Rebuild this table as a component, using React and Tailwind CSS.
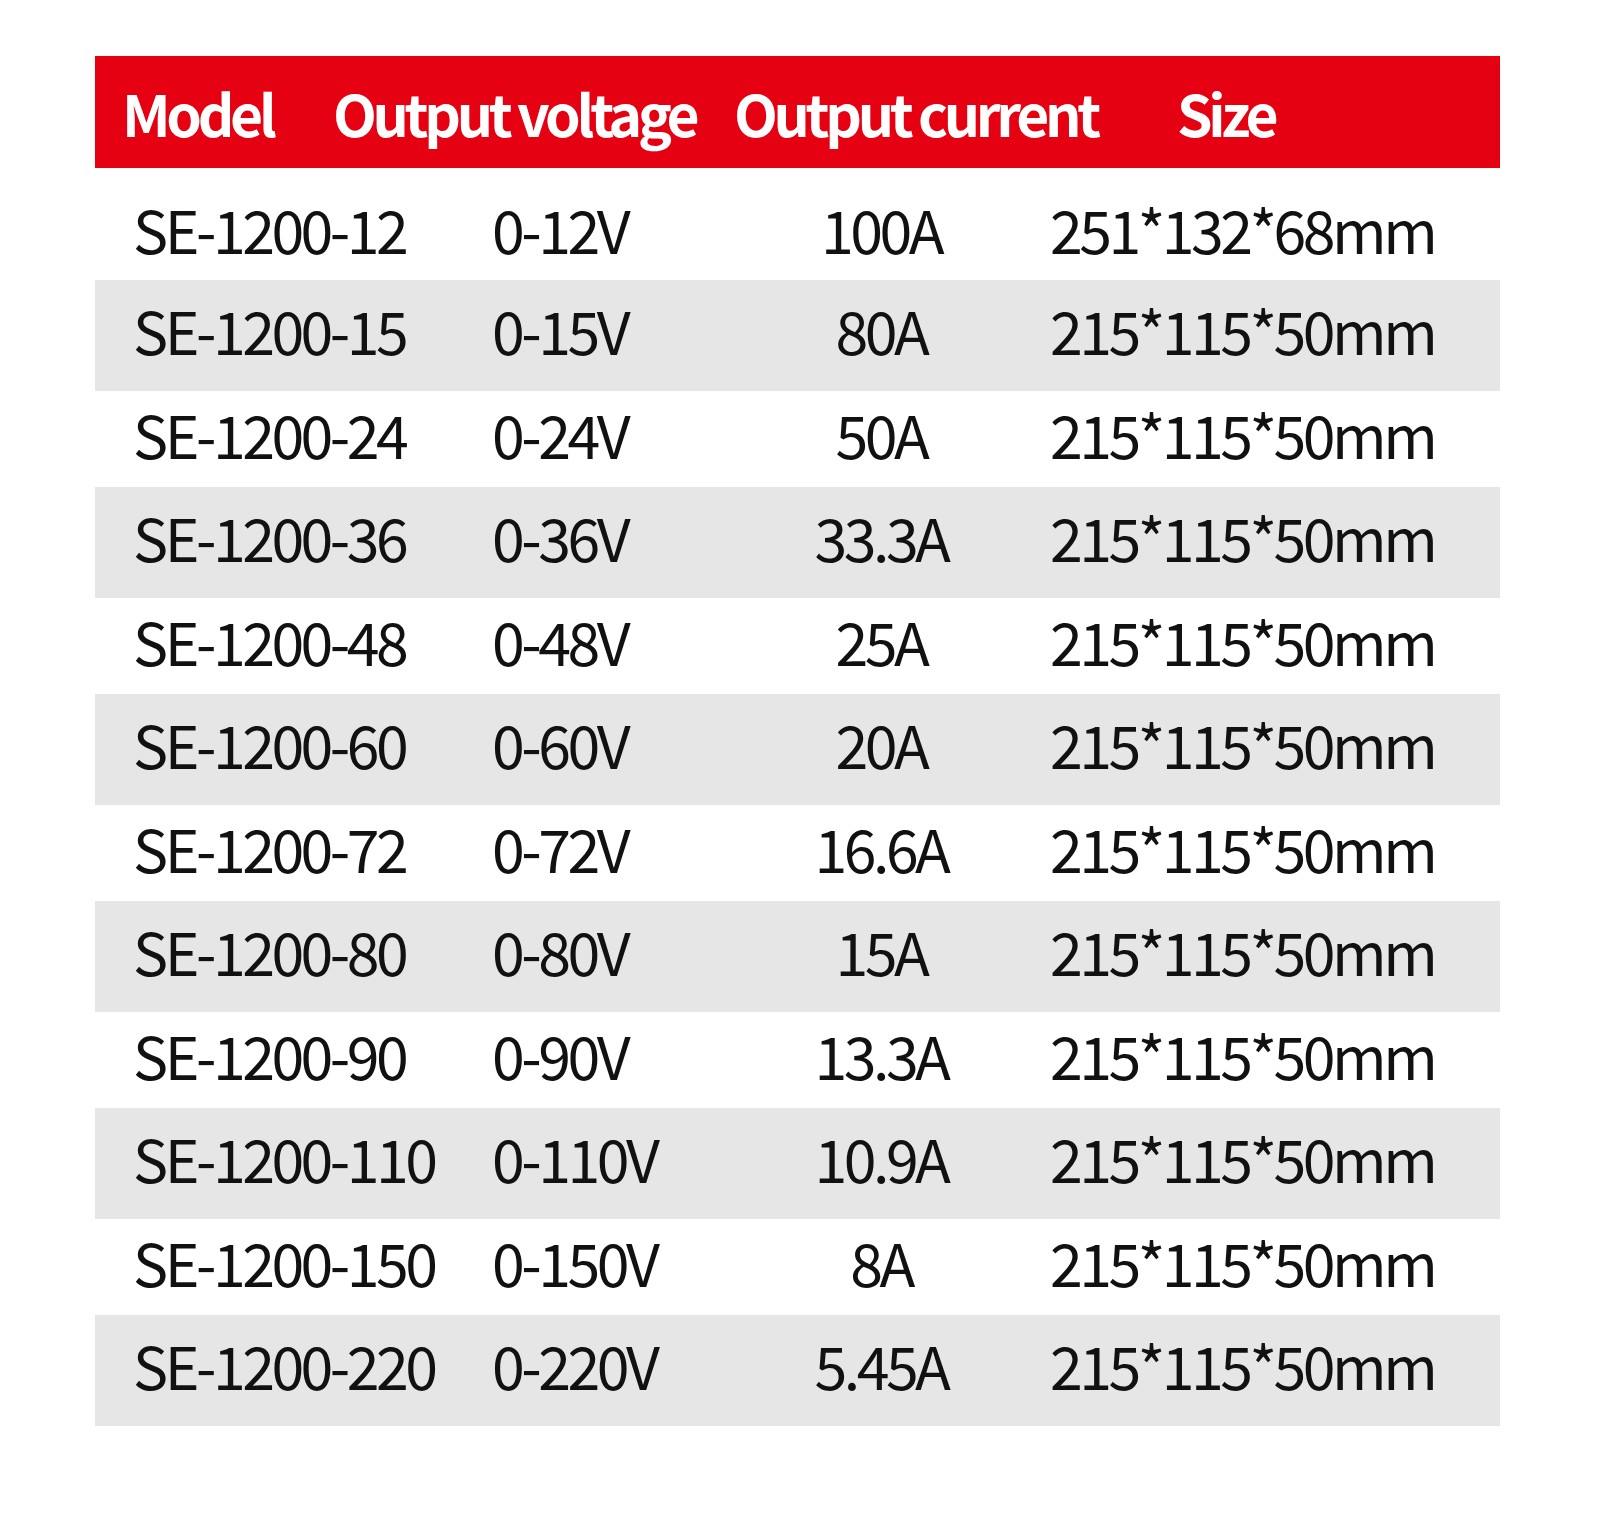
const rows = [
    ['SE-1200-12', '0-12V', '100A', '251*132*68mm'],
    ['SE-1200-15', '0-15V', '80A', '215*115*50mm'],
    ['SE-1200-24', '0-24V', '50A', '215*115*50mm'],
    ['SE-1200-36', '0-36V', '33.3A', '215*115*50mm'],
    ['SE-1200-48', '0-48V', '25A', '215*115*50mm'],
    ['SE-1200-60', '0-60V', '20A', '215*115*50mm'],
    ['SE-1200-72', '0-72V', '16.6A', '215*115*50mm'],
    ['SE-1200-80', '0-80V', '15A', '215*115*50mm'],
    ['SE-1200-90', '0-90V', '13.3A', '215*115*50mm'],
    ['SE-1200-110', '0-110V', '10.9A', '215*115*50mm'],
    ['SE-1200-150', '0-150V', '8A', '215*115*50mm'],
    ['SE-1200-220', '0-220V', '5.45A', '215*115*50mm'],
];

const font = { fontFamily: '"Noto Sans CJK SC", "Noto Sans", sans-serif' };

export default function App() {
    return (
        <div className="w-[1600px] h-[1524px] bg-white pt-[56px] pl-[95px]" style={font}>
            <div className="w-[1405px]">
                {/* Header */}
                <div className="h-[112px] bg-[#e50012] grid grid-cols-[238px_401px_443px_1fr] items-center text-white font-bold text-[57px] tracking-[-4.3px] leading-none whitespace-nowrap">
                    <div className="pl-[27px]">Model</div>
                    <div>Output voltage</div>
                    <div>Output current</div>
                    <div>Size</div>
                </div>

                {/* Rows */}
                {rows.map((r, i) => {
                    const gray = i % 2 === 1;
                    const h = i === 0 ? 'h-[112px] pt-[8px]' : gray ? 'h-[111px] pb-[12px]' : 'h-[96px] pb-[12px]';
                    return (
                        <div
                            key={r[0]}
                            className={`${h} ${gray ? 'bg-[#e6e6e6]' : 'bg-white'} grid grid-cols-[397px_284px_210px_1fr] items-center text-[#111] text-[59px] tracking-[-3.5px] leading-none whitespace-nowrap`}
                        >
                            <div className="pl-[38px]">{r[0]}</div>
                            <div>{r[1]}</div>
                            <div className="text-center">{r[2]}</div>
                            <div className="pl-[64px]">{r[3]}</div>
                        </div>
                    );
                })}
            </div>
        </div>
    );
}
